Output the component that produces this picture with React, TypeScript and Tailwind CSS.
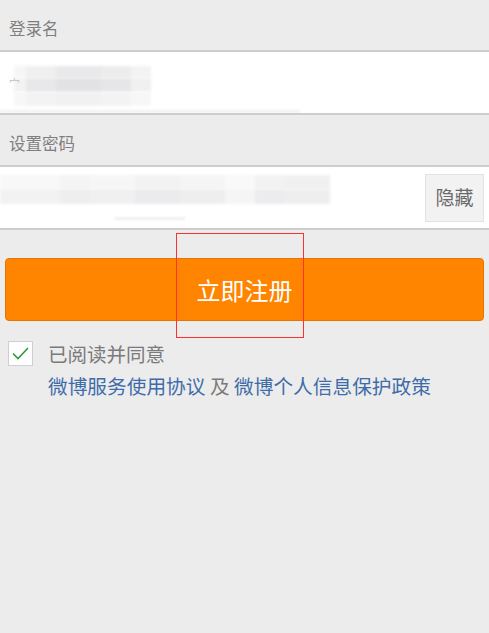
import React from "react";

const font = { fontFamily: '"Noto Sans CJK SC", "Noto Sans", sans-serif' };

function Mosaic({ cells, h }: { cells: { w: number; c: string }[]; h: number }) {
  return (
    <div className="flex blur-[1.5px]">
      {cells.map((cell, i) => (
        <div key={i} style={{ width: cell.w, height: h, background: cell.c }} />
      ))}
    </div>
  );
}

export default function App() {
  return (
    <div
      className="relative w-[489px] h-[633px] bg-[#ececec] overflow-hidden"
      style={font}
    >
      <div className="h-[50px] pl-[9px] pt-[6px] flex items-center text-[16.5px] text-[#7f7f7f]">
        登录名
      </div>
      <div className="h-[65px] border-y-2 border-[#cdcdcd] bg-white relative overflow-hidden">
        <div className="flex flex-col pt-[14px] pl-[14px]">
          <Mosaic
            h={12}
            cells={[
              { w: 12, c: "#f6f6f6" },
              { w: 30, c: "#efeff0" },
              { w: 45, c: "#e9e9eb" },
              { w: 30, c: "#ececed" },
              { w: 20, c: "#f3f3f3" },
            ]}
          />
          <Mosaic
            h={14}
            cells={[
              { w: 12, c: "#f3f3f3" },
              { w: 30, c: "#e8e8ea" },
              { w: 45, c: "#e2e2e4" },
              { w: 30, c: "#e6e6e8" },
              { w: 20, c: "#f0f0f0" },
            ]}
          />
          <Mosaic
            h={14}
            cells={[
              { w: 12, c: "#f7f7f7" },
              { w: 30, c: "#f3f3f4" },
              { w: 45, c: "#f1f1f2" },
              { w: 30, c: "#f3f3f3" },
              { w: 20, c: "#f7f7f7" },
            ]}
          />
          <div className="mt-[4px] ml-[-14px] w-[300px] h-[3px] bg-[#f1f1f1] blur-[1px]" />
        </div>
        <div className="absolute left-[9px] top-[23px] text-[11px] text-[#c0c0c0]">宀</div>
      </div>
      <div className="h-[50px] pl-[9px] pt-[6px] flex items-center text-[16.5px] text-[#7f7f7f]">
        设置密码
      </div>
      <div className="h-[65px] border-y-2 border-[#cdcdcd] bg-white flex items-center justify-between pr-[5px]">
        <div className="flex flex-col">
          <Mosaic
            h={14}
            cells={[
              { w: 60, c: "#f8f8f8" },
              { w: 30, c: "#f4f4f5" },
              { w: 45, c: "#f6f6f6" },
              { w: 45, c: "#f2f2f3" },
              { w: 45, c: "#f5f5f5" },
              { w: 30, c: "#f9f9f9" },
              { w: 30, c: "#f2f2f3" },
              { w: 45, c: "#f0f0f1" },
            ]}
          />
          <Mosaic
            h={15}
            cells={[
              { w: 60, c: "#f2f2f2" },
              { w: 30, c: "#eeeeef" },
              { w: 45, c: "#f0f0f1" },
              { w: 45, c: "#ebebed" },
              { w: 45, c: "#eeeeef" },
              { w: 30, c: "#f5f5f5" },
              { w: 30, c: "#ececee" },
              { w: 45, c: "#eeeeef" },
            ]}
          />
          <div className="mt-[13px] ml-[115px] w-[70px] h-[3px] bg-[#f3eeee] blur-[1px]" />
        </div>
        <div className="w-[59px] h-[48px] bg-[#f2f2f2] border border-[#e2e2e2] flex items-center justify-center text-[19px] text-[#6a6a6a]">
          隐藏
        </div>
      </div>
      <div className="px-[5px] pt-[28px]">
        <div className="h-[63px] rounded-[4px] bg-[#ff8400] border border-[#e87400] flex items-center justify-center text-white text-[24px]">
          立即注册
        </div>
      </div>
      <div className="flex mt-[20px] pl-[8px]">
        <div className="w-[25px] h-[25px] bg-white border border-[#cfcfcf] flex items-center justify-center shrink-0">
          <svg width="17" height="13" viewBox="0 0 17 13">
            <path d="M1 6.5 L6 11.5 L16 1" fill="none" stroke="#2e9a3c" strokeWidth="1.6" />
          </svg>
        </div>
        <div className="ml-[15px] flex flex-col">
          <div className="text-[19.5px] text-[#7a7a7a] leading-[26px]">已阅读并同意</div>
          <div className="text-[19.7px] leading-[26px] mt-[6px] whitespace-nowrap">
            <span className="text-[#3f6ca9]">微博服务使用协议</span>
            <span className="text-[#7a7a7a]"> 及 </span>
            <span className="text-[#3f6ca9]">微博个人信息保护政策</span>
          </div>
        </div>
      </div>
      <div className="absolute left-[176px] top-[233px] w-[128px] h-[105px] border border-[#ff3030] pointer-events-none" />
    </div>
  );
}
